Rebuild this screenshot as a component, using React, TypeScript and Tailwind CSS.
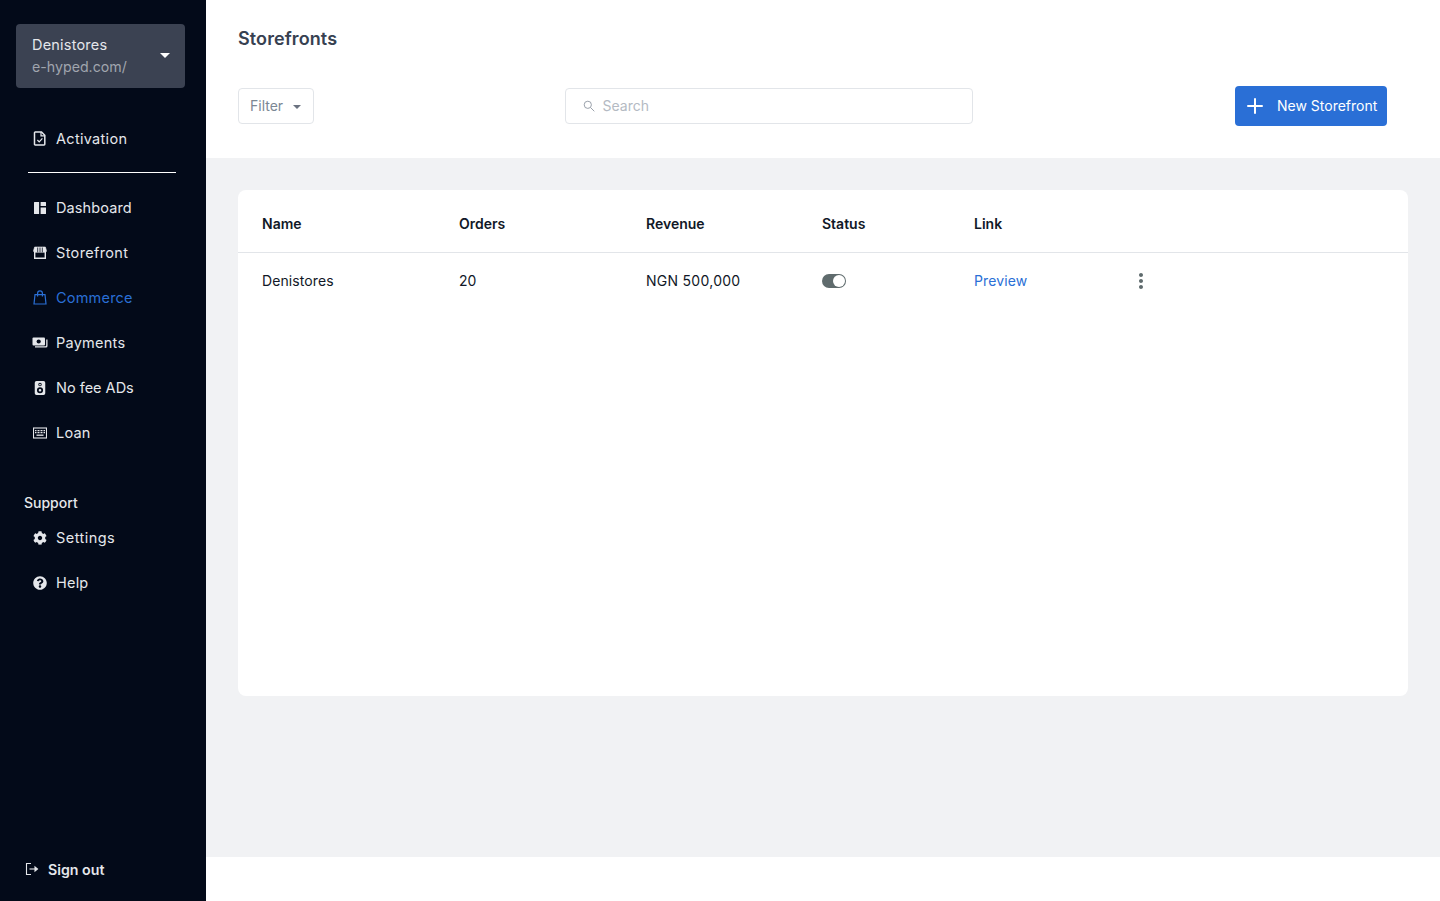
import type { ReactNode } from "react";
import { BsSpeakerFill } from "react-icons/bs";
import { FaCog, FaQuestionCircle } from "react-icons/fa";
import { MdMoreVert } from "react-icons/md";
import { Plus } from "lucide-react";

const font = "font-['Inter',sans-serif]";

function ActivationIcon() {
  return (
    <svg width="14" height="15" viewBox="0 0 14 15" fill="none" stroke="currentColor" strokeWidth="1.5">
      <path d="M2.2 1h6.3l3.3 3.3v9a.7.7 0 0 1-.7.7H2.2a.7.7 0 0 1-.7-.7V1.7a.7.7 0 0 1 .7-.7z" />
      <path d="M8 1v3.8h3.8" strokeWidth="1.2" />
      <path d="M4.4 9l1.8 1.9 3.2-3.6" strokeWidth="1.2" />
    </svg>
  );
}

function DashIcon() {
  return (
    <svg width="14" height="14" viewBox="0 0 14 14" fill="currentColor">
      <path d="M1.5 1h4.6v12H1.5a.5.5 0 0 1-.5-.5v-11a.5.5 0 0 1 .5-.5zM7.6 1h4.9a.5.5 0 0 1 .5.5V5H7.6zM7.6 6.4H13v6.1a.5.5 0 0 1-.5.5H7.6z" />
    </svg>
  );
}

function StoreIcon() {
  return (
    <svg width="14" height="14" viewBox="0 0 14 14" fill="none" stroke="currentColor">
      <path d="M1.6 1h10.8l1.1 3.8a1.5 1.5 0 0 1-1.4 1.5H1.9A1.5 1.5 0 0 1 .5 4.8z" fill="currentColor" strokeWidth="0.6" />
      <path d="M4.7 1.5v4.8M7 1.5v4.8M9.3 1.5v4.8" stroke="#030a19" strokeWidth="0.8" />
      <path d="M1.7 6v6.3h10.6V6" strokeWidth="1.4" />
    </svg>
  );
}

function BagIcon() {
  return (
    <svg width="14" height="15" viewBox="0 0 14 15" fill="none" stroke="currentColor" strokeWidth="1.2">
      <path d="M2 4.6h10l1 9.4H1z" />
      <path d="M4.6 6.5V3.2a2.4 2.4 0 0 1 4.8 0v3.3" />
    </svg>
  );
}

function PayIcon() {
  return (
    <svg width="16" height="14" viewBox="0 0 16 14" fill="currentColor">
      <rect x="0.5" y="1.5" width="12.5" height="8" rx="1" />
      <circle cx="6.7" cy="5.5" r="2.1" fill="#030a19" />
      <path d="M14.2 3.5h1.3V10a1.6 1.6 0 0 1-1.6 1.6H3v-1.3h10.5a.7.7 0 0 0 .7-.7z" />
    </svg>
  );
}

function LoanIcon() {
  return (
    <svg width="14" height="12" viewBox="0 0 14 12" fill="none" stroke="currentColor">
      <rect x="0.5" y="1" width="13" height="10" strokeWidth="1.1" />
      <path d="M2 3.6h10M2 5.6h10" strokeWidth="1.3" strokeDasharray="1 0.5" />
      <path d="M3.5 8.2h7" strokeWidth="1.3" />
    </svg>
  );
}

function SignOutIcon() {
  return (
    <svg width="14" height="14" viewBox="0 0 14 14" fill="none" stroke="currentColor" strokeWidth="1.1" className="ml-px">
      <path d="M6 1.5H1.5v11H6" />
      <path d="M4.5 7H12" />
      <path d="M10 5l2.5 2-2.5 2z" fill="currentColor" />
    </svg>
  );
}

function NavItem({
  icon,
  label,
  active,
  className = "tracking-[0.2px]",
}: {
  icon: ReactNode;
  label: string;
  active?: boolean;
  className?: string;
}) {
  return (
    <a
      className={`flex h-[45px] items-center text-[14.5px] ${className} ${
        active ? "text-[#2a6fd6]" : "text-[#e5e7eb]"
      }`}
    >
      <span className="flex w-4 justify-center">{icon}</span>
      <span className="ml-2">{label}</span>
    </a>
  );
}

export default function App() {
  return (
    <div className={`flex h-[901px] w-[1440px] overflow-hidden bg-white ${font}`}>
      <aside className="flex w-[206px] shrink-0 flex-col bg-[#030a19] pt-6 pb-[21px]">
        <div className="mx-4 flex h-16 w-[169px] items-center justify-between rounded bg-[#3b4252] pr-[15px] pl-4">
          <div>
            <p className="text-[14.5px] leading-[22px] tracking-[0.2px] text-[#e5e7eb]">Denistores</p>
            <p className="text-[14.2px] leading-[22px] text-[#a0a5ae]">e-hyped.com/</p>
          </div>
          <span className="mt-[-2px] border-x-[5px] border-t-[5px] border-x-transparent border-t-white" />
        </div>

        <nav className="mt-[28px] pl-8">
          <NavItem icon={<ActivationIcon />} label="Activation" className="tracking-[0.3px]" />
          <div className="mt-[11px] mb-[12px] ml-[-4px] h-px w-[148px] bg-white" />
          <NavItem icon={<DashIcon />} label="Dashboard" className="tracking-[0.1px]" />
          <NavItem icon={<StoreIcon />} label="Storefront" className="tracking-[0.35px]" />
          <NavItem icon={<BagIcon />} label="Commerce" active />
          <NavItem icon={<PayIcon />} label="Payments" className="tracking-[0.25px]" />
          <NavItem icon={<BsSpeakerFill size={14} />} label="No fee ADs" className="tracking-[0px]" />
          <NavItem icon={<LoanIcon />} label="Loan" />
        </nav>

        <p className="mt-[37px] pl-6 text-[14px] font-medium leading-[22px] text-[#e5e7eb]">Support</p>
        <nav className="mt-px pl-8">
          <NavItem icon={<FaCog size={14} />} label="Settings" className="tracking-[0.45px]" />
          <NavItem icon={<FaQuestionCircle size={14} />} label="Help" />
        </nav>

        <a className="mt-auto flex items-center pl-6 text-[14.2px] font-semibold text-[#e5e7eb]">
          <SignOutIcon />
          <span className="ml-[9px]">Sign out</span>
        </a>
      </aside>

      <main className="flex min-w-0 flex-1 flex-col">
        <header className="h-[158px] shrink-0 bg-white pt-[26px] pr-[53px] pl-8">
          <h1 className="text-lg leading-[26px] font-semibold tracking-[0.1px] text-[#374151]">Storefronts</h1>
          <div className="mt-[34px] flex items-center justify-between">
            <button className="flex h-9 w-[76px] items-center rounded border border-[#e2e5e9] pl-[11px] text-sm text-[#7b8794]">
              Filter
              <span className="mt-px ml-[10px] border-x-4 border-t-4 border-x-transparent border-t-[#6b7280]" />
            </button>
            <label className="mr-3 flex h-9 w-[408px] items-center rounded border border-[#e2e5e9] pl-[17px] text-sm text-[#b4bac3]">
              <svg width="12" height="12" viewBox="0 0 12 12" fill="none" stroke="#9aa1ab" strokeWidth="1">
                <circle cx="4.8" cy="4.8" r="3.6" />
                <path d="M7.5 7.5l3.8 3.8" />
              </svg>
              <span className="ml-2">Search</span>
            </label>
            <button className="flex h-10 w-[152px] items-center rounded bg-[#2a6fd6] pl-2 text-sm text-white">
              <Plus size={24} strokeWidth={2} />
              <span className="ml-[10px]">New Storefront</span>
            </button>
          </div>
        </header>

        <section className="h-[699px] shrink-0 bg-[#f1f2f4] px-8 pt-8 pb-[161px]">
          <div className="h-[506px] w-[1170px] rounded-lg bg-white">
            <div className="flex h-[63px] items-center border-b border-[#e2e5e9] pt-[6px] pl-6 text-sm font-semibold text-[#111827]">
              <span className="w-[197px]">Name</span>
              <span className="w-[187px]">Orders</span>
              <span className="w-[176px]">Revenue</span>
              <span className="w-[152px]">Status</span>
              <span>Link</span>
            </div>
            <div className="flex h-[56px] items-center pl-6 text-sm text-[#111827]">
              <span className="w-[197px] tracking-[0.1px]">Denistores</span>
              <span className="w-[187px]">20</span>
              <span className="w-[176px] tracking-[0.27px]">NGN 500,000</span>
              <span className="w-[152px]">
                <span className="flex h-[14px] w-6 items-center justify-end rounded-full bg-[#5f6b6d] pr-[1px]">
                  <span className="size-3 rounded-full bg-white" />
                </span>
              </span>
              <span className="w-[171px] tracking-[0.1px] text-[#2a6fd6]">Preview</span>
              <MdMoreVert size={24} className="ml-[-16px] text-[#5f6b6d]" />
            </div>
          </div>
        </section>
      </main>
    </div>
  );
}
